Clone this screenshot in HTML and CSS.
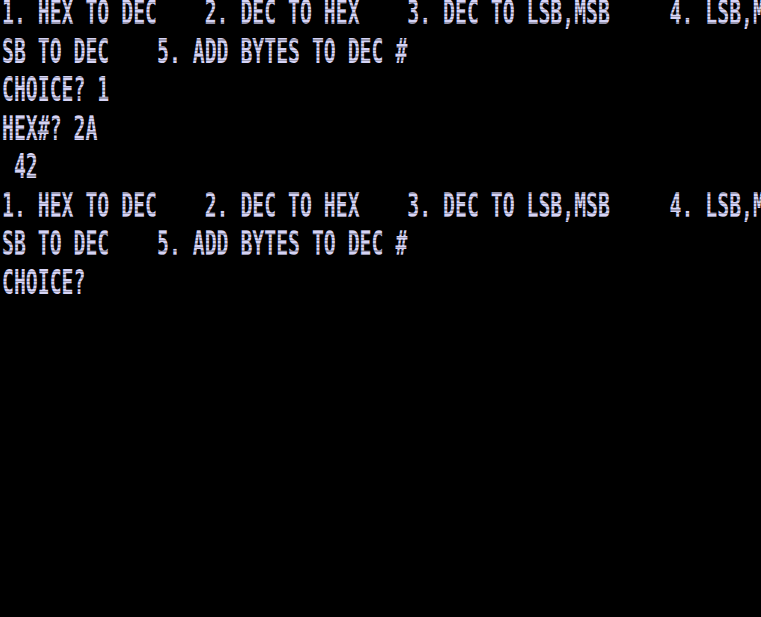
FILE: index.html
```html
<!DOCTYPE html>
<html>
<head>
<meta charset="utf-8">
<link rel="stylesheet" href="styles.css">
<title>TRS-80</title>
</head>
<body>
<div class="crt">
  <div class="screen">
    <div class="line">1. HEX TO DEC    2. DEC TO HEX    3. DEC TO LSB,MSB     4. LSB,M</div>
    <div class="line">SB TO DEC    5. ADD BYTES TO DEC #</div>
    <div class="line">CHOICE? 1</div>
    <div class="line">HEX#? 2A</div>
    <div class="line"> 42</div>
    <div class="line">1. HEX TO DEC    2. DEC TO HEX    3. DEC TO LSB,MSB     4. LSB,M</div>
    <div class="line">SB TO DEC    5. ADD BYTES TO DEC #</div>
    <div class="line">CHOICE?</div>
  </div>
</div>
</body>
</html>
```
FILE: styles.css
```css
html, body {
  margin: 0;
  padding: 0;
  background: #000;
  width: 761px;
  height: 617px;
  overflow: hidden;
}

.crt {
  position: relative;
  width: 761px;
  height: 617px;
  overflow: hidden;
  background: #000;
}

.crt::after {
  content: "";
  position: absolute;
  inset: 0;
  background: repeating-linear-gradient(
    to bottom,
    rgba(0, 0, 0, 0) 0px,
    rgba(0, 0, 0, 0) 2px,
    rgba(0, 0, 0, 0.3) 2px,
    rgba(0, 0, 0, 0.3) 3.4px
  );
  pointer-events: none;
}

.screen {
  width: 1268px;
  margin-top: -6px;
  margin-left: 2px;
  transform: scaleX(0.6);
  transform-origin: 0 0;
  font-family: "DejaVu Sans Mono", monospace;
  font-weight: bold;
  font-size: 33px;
  line-height: 38.5px;
  color: #d6d4f6;
}

.line {
  height: 38.5px;
  white-space: pre;
}
```
